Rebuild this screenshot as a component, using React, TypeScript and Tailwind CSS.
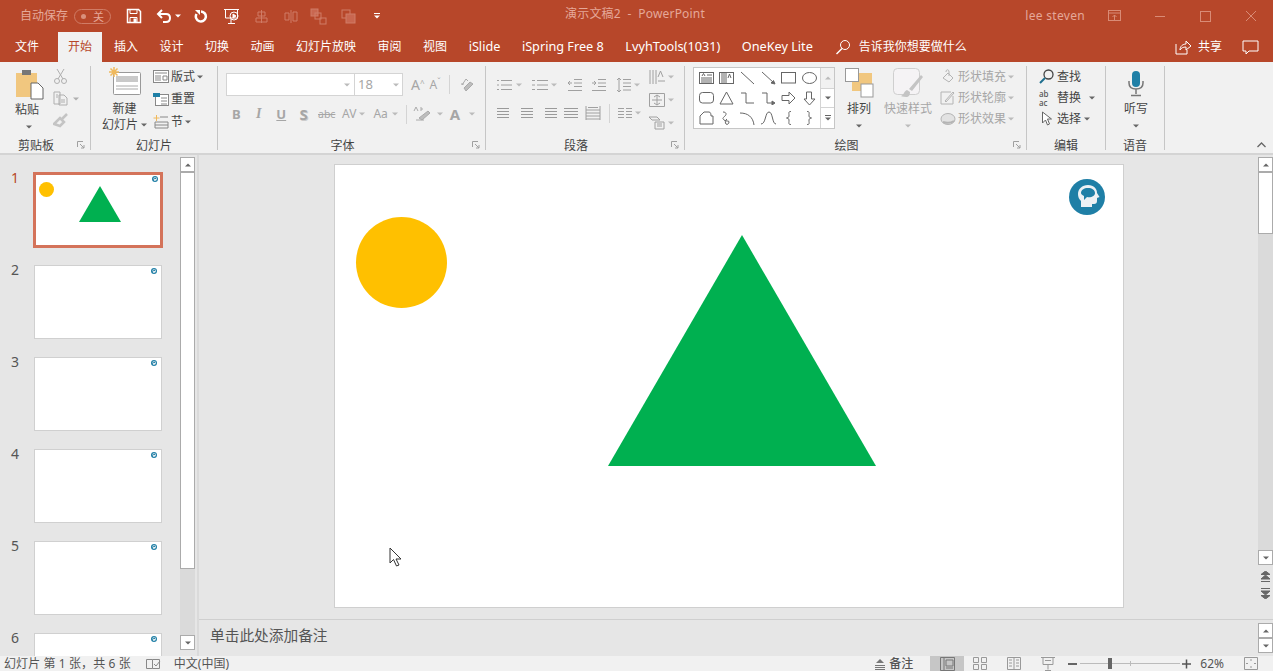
import type { ReactNode } from "react";

const FONT = "font-['Noto_Sans','Noto_Sans_CJK_SC',sans-serif]";

function Caret({ color = "#666", className = "" }: { color?: string; className?: string }) {
  return (
    <svg width="6" height="4" viewBox="0 0 6 4" className={`shrink-0 ${className}`}>
      <path d="M0 0.5h6L3 3.5z" fill={color} />
    </svg>
  );
}

function Ico({ w = 16, h = 16, color = "#777", className = "", children }: { w?: number; h?: number; color?: string; className?: string; children: ReactNode }) {
  return (
    <svg width={w} height={h} viewBox={`0 0 ${w} ${h}`} fill="none" stroke={color} strokeWidth="1" className={`shrink-0 ${className}`}>
      {children}
    </svg>
  );
}

function Expander() {
  return (
    <svg width="8" height="8" viewBox="0 0 8 8" fill="none" stroke="#A0A0A0" className="justify-self-end mr-[5px]">
      <path d="M0.5 6V0.5H6M3 3l4 4M7 4v3H4" />
    </svg>
  );
}

function Group({ w, label, expander, children }: { w: string; label: string; expander?: boolean; children: ReactNode }) {
  return (
    <div className={`${w} h-[84px] shrink-0 flex flex-col border-r border-[#C6C6C6]`}>
      <div className="h-[72px] flex">{children}</div>
      <div className={`grid items-center h-[12px] text-[12px] leading-[14px] text-[#444] ${expander ? "grid-cols-[1fr_auto_1fr_18px]" : "grid-cols-[1fr_auto_1fr]"}`}>
        <span />
        <span className="translate-y-[1px]">{label}</span>
        <span />
        {expander && <Expander />}
      </div>
    </div>
  );
}

const shapes: ReactNode[] = [
  <g key="a"><rect x="0.5" y="1.5" width="14" height="11" /><path d="M3 5l1.5-2.5L6 5M8 4h5M2 7h11M2 9h11M2 11h11" /></g>,
  <g key="b"><rect x="0.5" y="1.5" width="14" height="11" /><path d="M3 2v10M5 2v10M7 2v10M9 7l1.5-4L12 7" /></g>,
  <path key="c" d="M1 1l13 12" />,
  <g key="d"><path d="M1 1l12 11" /><path d="M14 13l-4-1 2.5-2.500z" fill="#666" /></g>,
  <rect key="e" x="0.5" y="1.500" width="14" height="10.500" />,
  <ellipse key="f" cx="7.500" cy="7" rx="7" ry="5.500" />,
  <rect key="g" x="0.500" y="1.500" width="14" height="10.500" rx="3" />,
  <path key="h" d="M7.500 1L14 13H1z" />,
  <path key="i" d="M1 2h5v10h8" />,
  <g key="j"><path d="M1 2h5v10h6" /><path d="M14 12l-3-2v4z" fill="#666" /></g>,
  <path key="k" d="M1 4.500h7V1l6 6-6 6V9.500H1z" />,
  <path key="l" d="M4.500 1h5v7H13l-5.500 6L2 8h2.500z" />,
  <path key="m" d="M1 13V5l4-4h5c2 0 2 3 2 4h2v8z" />,
  <path key="n" d="M4 1c3 0 4 2 2 4S3 7 5 9s5 0 5 2-2 3-3 2-1-4 1-5" />,
  <path key="o" d="M0 2c8 0 13 4 14 12" />,
  <path key="p" d="M0 13C5 13 4 1 8 1s3 12 7 12" />,
  <path key="q" d="M10 0.500C7 0.500 8 2 8 4S8 6.500 5.500 7C8 7.500 8 8 8 10s-1 3.500 2 3.500" />,
  <path key="r" d="M5 0.500C8 0.500 7 2 7 4s0 2.500 2.500 3C7 7.500 7 8 7 10s1 3.500-2 3.500" />,
];

const shapeActions = [
  { label: "形状填充", icon: <g><path d="M3 9l5-5 5 5-4 4z" /><path d="M6 3c0-3 3-3 3 0v4" /></g> },
  { label: "形状轮廓", icon: <g><path d="M11 2H1v12h12V6" /><path d="M5 11l8-9 1 1-8 9z" /></g> },
  { label: "形状效果", icon: <g><ellipse cx="8" cy="8" rx="7" ry="5.500" fill="#E2E2E2" /><path d="M3 11c3 1 8 1 11-1" strokeWidth="2" /></g> },
];

const cnTabs = ["插入", "设计", "切换", "动画", "幻灯片放映", "审阅", "视图"];
const enTabs = ["iSlide", "iSpring Free 8", "LvyhTools(1031)", "OneKey Lite"];

function Lines({ x = 0, n = 4, w = 12, color = "#9A9A9A" }: { x?: number; n?: number; w?: number; color?: string }) {
  return (
    <Ico w={16} h={14} color={color}>
      <path d={Array.from({ length: n }, (_, i) => `M${x} ${2.5 + i * 3}h${w}`).join("")} />
    </Ico>
  );
}

function TitleBar() {
  return (
    <div className="h-[32px] shrink-0 flex items-center relative text-[12px] text-[#E5A899]">
      <span className="ml-[20px] w-[48px]">自动保存</span>
      <div className="ml-[6px] w-[37px] h-[15px] rounded-full border border-[#D07C66] flex items-center justify-between px-[6px] text-[11px] leading-none">
        <span className="w-[5px] h-[5px] rounded-full bg-[#D9907C]" />
        <span>关</span>
      </div>
      <Ico w={16} h={16} color="#fff" className="ml-[15px]">
        <path d="M1.500 1.500h11l2 2v11h-13z" strokeWidth="1.500" />
        <path d="M4 1.500v4h7v-4M4 14.500v-5h7v5" />
        <rect x="8" y="11" width="2" height="3" fill="#fff" />
      </Ico>
      <Ico w={16} h={16} color="#fff" className="ml-[14px]">
        <path d="M2 6h8c3 0 4 2 4 4s-1 4-4 4H7" strokeWidth="2" />
        <path d="M6 2L2 6l4 4" strokeWidth="2" />
      </Ico>
      <Caret color="#fff" className="ml-[3px]" />
      <Ico w={14} h={14} color="#fff" className="ml-[13px]">
        <path d="M7 2.500A5 5 0 1 1 2.500 5" strokeWidth="2.500" />
        <path d="M1 1h5v5z" fill="#fff" stroke="none" />
      </Ico>
      <Ico w={17} h={17} color="#fff" className="ml-[15px]">
        <path d="M1 1.500h15M2.500 2v8h12V2M8 11v4M5 15.500h7" />
        <circle cx="11" cy="8" r="4" />
        <path d="M10 6l3 2-3 2z" fill="#fff" />
      </Ico>
      <Ico w={15} h={15} color="#D07C66" className="ml-[14px]">
        <path d="M7.500 1v13M4 3h7v4H4zM2 9h11v4H2z" />
      </Ico>
      <Ico w={15} h={15} color="#D07C66" className="ml-[15px]">
        <path d="M7 1v13M1 4h4v7H1zM9 3h4v9H9z" />
      </Ico>
      <Ico w={17} h={17} color="#D07C66" className="ml-[11px]">
        <rect x="1" y="1" width="7" height="7" fill="#C96750" />
        <rect x="5" y="5" width="6" height="6" />
        <rect x="10" y="10" width="6" height="6" />
      </Ico>
      <Ico w={15} h={15} color="#D07C66" className="ml-[14px]">
        <rect x="1" y="1" width="8" height="8" />
        <rect x="5" y="5" width="9" height="9" fill="#C96750" />
      </Ico>
      <div className="ml-[18px] flex flex-col items-center gap-[1px]">
        <span className="w-[6px] h-[1px] bg-white" />
        <Caret color="#fff" />
      </div>
      <span className="absolute left-[565px] top-[5px] text-[12px] leading-[18px] tracking-[0.2px]">演示文稿2&nbsp; -&nbsp; PowerPoint</span>
      <span className="ml-auto tracking-[0.3px]">lee steven</span>
      <Ico w={14} h={12} color="#D98B76" className="ml-[23px]">
        <rect x="0.500" y="0.500" width="12" height="10" />
        <path d="M0.500 3h12M6.500 10V5M4.500 7l2-2 2 2" />
      </Ico>
      <span className="ml-[33px] w-[10px] h-[1px] bg-[#D98B76]" />
      <span className="ml-[35px] w-[11px] h-[11px] border border-[#D98B76]" />
      <Ico w={12} h={12} color="#D98B76" className="ml-[34px] mr-[16px]">
        <path d="M1 1l10 10M11 1L1 11" />
      </Ico>
    </div>
  );
}

function TabsRow() {
  return (
    <div className="h-[30px] shrink-0 flex items-end text-[12px] text-white">
      <span className="ml-[15px] h-[30px] leading-[29px]">文件</span>
      <span className="ml-[19px] w-[44px] h-[30px] bg-[#F1F1F1] text-[#B7472A] text-center leading-[29px]">开始</span>
      <div className="ml-[12px] h-[30px] flex gap-[21.500px] leading-[29px] whitespace-nowrap">
        {cnTabs.map((t) => (
          <span key={t}>{t}</span>
        ))}
        {enTabs.map((t) => (
          <span key={t} className="text-[12.7px]">{t}</span>
        ))}
      </div>
      <div className="ml-[22px] h-[30px] flex items-center">
        <Ico w={16} h={16} color="#fff">
          <circle cx="10" cy="6" r="4.500" />
          <path d="M7 9.500L1.500 15" strokeWidth="1.500" />
        </Ico>
        <span className="ml-[8px]">告诉我你想要做什么</span>
      </div>
      <div className="ml-auto h-[30px] flex items-center">
        <Ico w={16} h={16} color="#fff">
          <path d="M1 5v10h11V11" />
          <path d="M5 11c0-4 3-6 6-6V2l5 5-5 4V8c-3 0-5 1-6 3z" />
        </Ico>
        <span className="ml-[7px]">共享</span>
        <Ico w={17} h={15} color="#fff" className="ml-[20px] mr-[14px]">
          <path d="M1 1h15v10H7l-3 3v-3H1z" />
        </Ico>
      </div>
    </div>
  );
}

function Ribbon() {
  return (
    <div className="h-[93px] shrink-0 bg-[#F1F1F1] border-b-2 border-[#D4D4D4] flex py-[4px] relative text-[12px] text-[#444]">
      <Group w="w-[91px]" label="剪贴板" expander>
        <div className="ml-[15px] w-[24px] flex flex-col items-start">
          <svg width="30" height="32" viewBox="0 0 30 32" className="mt-[2px] shrink-0">
            <rect x="1" y="5" width="21" height="24" fill="#F1C77F" />
            <rect x="7" y="2" width="9" height="5" fill="#777" />
            <path d="M16 15h7l5 5v11H16z" fill="#fff" stroke="#666" />
          </svg>
          <span className="mt-[2px] leading-[16px] whitespace-nowrap">粘贴</span>
          <Caret className="mt-[7px] ml-[11px]" />
        </div>
        <div className="ml-[14px] pt-[3px] flex flex-col gap-[7px]">
          <Ico w={15} h={15} color="#AFAFAF">
            <path d="M4 0l6 10M11 0L5 10" />
            <circle cx="4" cy="12" r="2.500" />
            <circle cx="11" cy="12" r="2.500" />
          </Ico>
          <div className="flex items-center gap-[5px]">
            <Ico w={15} h={15} color="#AFAFAF">
              <path d="M1 1h6v12H1zM6 4h5l3 3v7H6zM3 4h2M3 6h2M8 9h4M8 11h4" />
            </Ico>
            <Caret color="#AFAFAF" />
          </div>
          <Ico w={15} h={15} color="#C4C4C4">
            <path d="M9 6l5-5M1 11l6-6 4 4-4 4z" strokeWidth="2.500" />
          </Ico>
        </div>
      </Group>

      <Group w="w-[127px]" label="幻灯片">
        <div className="ml-[10px] w-[48px] flex flex-col items-center">
          <svg width="32" height="30" viewBox="0 0 32 30" className="mt-[1px] shrink-0">
            <rect x="4.500" y="5.500" width="27" height="22" fill="#fff" stroke="#999" rx="1" />
            <rect x="7" y="9" width="22" height="6" fill="#C9C9C9" />
            <path d="M7 19h22M7 22h22" stroke="#AAA" />
            <path d="M5 0v10M0 5h10M1.500 1.500l7 7M8.500 1.500l-7 7" stroke="#F0B95C" strokeWidth="1.500" />
          </svg>
          <span className="mt-[4px] -ml-[1px] leading-[16px]">新建</span>
          <span className="leading-[15px] -ml-[1px] whitespace-nowrap flex items-center gap-[3px]">
            幻灯片
            <Caret />
          </span>
        </div>
        <div className="ml-[4px] pt-[2px] flex flex-col gap-[5.500px]">
          <div className="h-[17px] flex items-center gap-[2px]">
            <Ico w={16} h={14} color="#888">
              <rect x="0.500" y="0.500" width="15" height="12" fill="#fff" />
              <path d="M2 3h12M2 6h6M2 8h6M2 10h6M10 6h4v4h-4z" />
            </Ico>
            <span>版式</span>
            <Caret />
          </div>
          <div className="h-[17px] flex items-center gap-[2px]">
            <Ico w={16} h={14} color="#888">
              <rect x="2.500" y="2.500" width="13" height="11" fill="#fff" />
              <path d="M0 1h7v4H0z" fill="#1F7FA6" stroke="none" />
              <path d="M8 6h6M8 9h6M8 12h6" />
            </Ico>
            <span>重置</span>
          </div>
          <div className="h-[17px] flex items-center gap-[2px]">
            <Ico w={16} h={14} color="#888">
              <path d="M0.500 3h6M3.500 0v6" stroke="#F0B95C" />
              <path d="M7 2h8M2 7h13v6H2zM2 10h13" />
            </Ico>
            <span>节</span>
            <Caret />
          </div>
        </div>
      </Group>

      <Group w="w-[268px]" label="字体" expander>
        <div className="flex flex-col pl-[8px] w-full">
          <div className="flex items-center mt-[7px]">
            <div className="w-[129px] h-[23px] bg-white border border-[#D4D4D4] flex items-center justify-end pr-[4px]">
              <Caret color="#BBB" />
            </div>
            <div className="w-[48px] h-[23px] bg-white border border-l-0 border-[#D4D4D4] flex items-center justify-between px-[3px] text-[13px] text-[#A6A6A6]">
              <span>18</span>
              <Caret color="#BBB" />
            </div>
            <span className="ml-[8px] text-[14px] text-[#A6A6A6] leading-none">A<sup className="text-[8px]">^</sup></span>
            <span className="ml-[5px] text-[12px] text-[#A6A6A6] leading-none">A<sup className="text-[8px]">ˇ</sup></span>
            <span className="ml-[8px] w-px h-[19px] bg-[#D4D4D4]" />
            <Ico w={16} h={16} color="#AAA" className="ml-[9px]">
              <path d="M3 8l4-6 2 2M2 7h3" />
              <path d="M7 14l7-7-3-2-6 6z" fill="#BDBDBD" />
            </Ico>
          </div>
          <div className="flex items-center mt-[9px] h-[18px] -ml-[1px] text-[#A6A6A6] text-[13px] font-bold leading-none">
            <span className="w-[22.500px] text-center">B</span>
            <span className="w-[22.500px] text-center italic font-['Liberation_Serif',serif] text-[14px]">I</span>
            <span className="w-[22.500px] text-center underline">U</span>
            <span className="w-[22.500px] text-center text-[15px] [text-shadow:1px_1px_0_#ccc]">S</span>
            <span className="ml-[3px] w-[16px] text-[10.500px] line-through font-normal">abc</span>
            <span className="ml-[8px] text-[12px] font-normal">AV</span>
            <Caret color="#BBB" className="ml-[3px]" />
            <span className="ml-[8px] text-[12px] font-normal">Aa</span>
            <Caret color="#BBB" className="ml-[4px]" />
            <span className="ml-[8px] w-px h-[19px] bg-[#D4D4D4]" />
            <Ico w={18} h={16} color="#AAA" className="ml-[6px]">
              <path d="M1 5l2-4 2 4M8 1v4M8 3h2M3 14h8" />
              <path d="M6 12l9-7 2 2-8 7z" fill="#BDBDBD" />
            </Ico>
            <Caret color="#BBB" className="ml-[6px]" />
            <span className="ml-[7px] text-[15px]">A</span>
            <Caret color="#BBB" className="ml-[9px]" />
          </div>
        </div>
      </Group>

      <Group w="w-[199px]" label="段落" expander>
        <div className="w-[163px] pl-[11px] pt-[11px] flex flex-col gap-[12px]">
          <div className="flex items-center h-[16px]">
            <Ico w={16} h={14} color="#A0A0A0"><path d="M4 2.500h11M4 7h11M4 11.500h11M0 2.500h2M0 7h2M0 11.500h2" /></Ico>
            <Caret color="#BBB" className="ml-[3px]" />
            <Ico w={16} h={14} color="#A0A0A0" className="ml-[10px]"><path d="M5 2.500h11M5 7h11M5 11.500h11M0 2.500h3M0 7h3M0 11.500h3" /></Ico>
            <Caret color="#BBB" className="ml-[3px]" />
            <Ico w={16} h={14} color="#A0A0A0" className="ml-[10px]"><path d="M7 1.500h8M7 5h8M7 8.500h8M1 12.500h14M5 5H1M3 3L1 5l2 2" /></Ico>
            <Ico w={16} h={14} color="#A0A0A0" className="ml-[8px]"><path d="M7 1.500h8M7 5h8M7 8.500h8M1 12.500h14M1 5h4M3 3l2 2-2 2" /></Ico>
            <Ico w={16} h={16} color="#A0A0A0" className="ml-[9px]"><path d="M7 2.500h8M7 6h8M7 9.500h8M7 13h8M3 1v14M1 3l2-2 2 2M1 13l2 2 2-2" /></Ico>
            <Caret color="#BBB" className="ml-[2px]" />
          </div>
          <div className="flex items-center h-[16px]">
            <Lines w={12} />
            <span className="ml-[6px]"><Lines w={12} x={2} /></span>
            <span className="ml-[6px]"><Lines w={12} x={4} /></span>
            <span className="ml-[6px]"><Lines n={4} w={14} x={1} /></span>
            <Ico w={16} h={16} color="#A0A0A0" className="ml-[6px]"><path d="M1 1v14M15 1v14M1 5h14M1 8h14M1 11h14M1 14h14M3 2.500h10" /></Ico>
            <span className="ml-[8px] w-px h-[19px] bg-[#D4D4D4]" />
            <Ico w={16} h={14} color="#A0A0A0" className="ml-[7px]"><path d="M1 2.500h6M1 5.500h6M1 8.500h6M1 11.500h6M9 2.500h6M9 5.500h6M9 8.500h6M9 11.500h6" /></Ico>
            <Caret color="#BBB" className="ml-[2px]" />
          </div>
        </div>
        <div className="pt-[2px] flex flex-col gap-[6px]">
          <div className="flex items-center gap-[3px] h-[17px]">
            <Ico w={16} h={16} color="#A0A0A0"><path d="M1 1v14M4 1v14M7 1v14M9 8l2.500-6L14 8M9 12h7" /></Ico>
            <Caret color="#BBB" />
          </div>
          <div className="flex items-center gap-[3px] h-[17px]">
            <Ico w={16} h={16} color="#A0A0A0"><path d="M0.500 1.500h15v13H0.500zM8 3v10M5 5l3-2 3 2M5 11l3 2 3-2M3 8h10" /></Ico>
            <Caret color="#BBB" />
          </div>
          <div className="flex items-center gap-[3px] h-[17px]">
            <Ico w={16} h={16} color="#A0A0A0"><path d="M0 2h8l3 3H3zM6 7h9v7H6zM8 9h5M8 11h5" /></Ico>
            <Caret color="#BBB" />
          </div>
        </div>
      </Group>

      <Group w="w-[342px]" label="绘图" expander>
        <div className="ml-[8px] mt-[1px] w-[142px] h-[62px] flex bg-white border border-[#C6C6C6]">
          <div className="w-[126px] grid grid-cols-6 items-center pl-[2px]">
            {shapes.map((s, i) => (
              <span key={i} className="flex justify-center">
                <Ico w={15} h={14} color="#666">{s}</Ico>
              </span>
            ))}
          </div>
          <div className="flex-1 flex flex-col border-l border-[#D4D4D4]">
            <div className="h-[21px] bg-[#F1F1F1] flex items-center justify-center border-b border-[#D4D4D4]">
              <Caret color="#BBB" className="rotate-180" />
            </div>
            <div className="h-[19px] flex items-center justify-center border-b border-[#D4D4D4]">
              <Caret />
            </div>
            <div className="flex-1 flex flex-col items-center justify-center gap-[1px]">
              <span className="w-[6px] h-px bg-[#666]" />
              <Caret />
            </div>
          </div>
        </div>
        <div className="ml-[7px] w-[34px] flex flex-col items-center">
          <svg width="29" height="30" viewBox="0 0 29 30" className="mt-[2px] shrink-0">
            <rect x="7" y="5" width="20" height="18" fill="#F1C77F" />
            <rect x="0.500" y="0.500" width="13" height="13" fill="#fff" stroke="#999" />
            <rect x="16" y="16" width="12" height="13" fill="#fff" stroke="#999" />
          </svg>
          <span className="mt-[3px] leading-[16px] whitespace-nowrap">排列</span>
          <Caret className="mt-[7px]" />
        </div>
        <div className="ml-[8px] w-[48px] flex flex-col items-center text-[#A6A6A6]">
          <svg width="32" height="32" viewBox="0 0 32 32" className="mt-[1px] shrink-0">
            <rect x="1.500" y="1.500" width="26" height="26" rx="4" fill="#F5F3F5" stroke="#CFCFCF" />
            <path d="M14 30c-3 0-5-1-5-1 3-1 3-5 6-6l3 2c0 3-1 5-4 5zM17 22l12-14 2 2-11 14z" fill="#C4C4C4" />
          </svg>
          <span className="mt-[2px] leading-[16px] whitespace-nowrap">快速样式</span>
          <Caret color="#BBB" className="mt-[7px]" />
        </div>
        <div className="ml-[8px] pt-[2px] flex flex-col gap-[4px] text-[#A6A6A6]">
          {shapeActions.map((a) => (
            <div key={a.label} className="h-[17px] flex items-center gap-[2px] whitespace-nowrap">
              <Ico w={16} h={16} color="#B4B4B4">{a.icon}</Ico>
              <span>{a.label}</span>
              <Caret color="#BBB" />
            </div>
          ))}
        </div>
      </Group>

      <Group w="w-[79px]" label="编辑">
        <div className="pl-[12px] pt-[2px] flex flex-col gap-[4px]">
          <div className="h-[17px] flex items-center gap-[3px]">
            <Ico w={15} h={15} color="#1F6F8F">
              <circle cx="9.500" cy="5.500" r="4.500" strokeWidth="1.300" stroke="#444" />
              <path d="M6 9l-5 5" strokeWidth="2" />
            </Ico>
            <span>查找</span>
          </div>
          <div className="h-[17px] flex items-center gap-[3px]">
            <span className="w-[15px] text-[8px] leading-[9px] text-[#555] font-medium">ab<br />ac</span>
            <span>替换</span>
            <Caret className="ml-[5px]" />
          </div>
          <div className="h-[17px] flex items-center gap-[3px]">
            <Ico w={15} h={15} color="#666">
              <path d="M3.500 1v11l3-3 2 5 2-1-2-5h4z" fill="#fff" />
            </Ico>
            <span>选择</span>
            <Caret />
          </div>
        </div>
      </Group>

      <Group w="w-[59px]" label="语音">
        <div className="w-full pl-[2px] flex flex-col items-center">
          <svg width="16" height="26" viewBox="0 0 16 26" className="mt-[5px] shrink-0">
            <rect x="4" y="0" width="8" height="16" rx="4" fill="#1F7FA6" />
            <path d="M1 10v2c0 4 3 6 7 6s7-2 7-6v-2M8 18v5M3 24.500h10" fill="none" stroke="#777" strokeWidth="1.500" />
          </svg>
          <span className="mt-[4px] leading-[16px]">听写</span>
          <Caret className="mt-[7px]" />
        </div>
      </Group>

      <svg width="9" height="6" viewBox="0 0 9 6" fill="none" stroke="#666" strokeWidth="1.300" className="absolute right-[7px] bottom-[5px]">
        <path d="M0.500 5l4-4 4 4" />
      </svg>
    </div>
  );
}

function ScrollBtn({ up = false, className = "" }: { up?: boolean; className?: string }) {
  return (
    <div className={`h-[15px] w-[15px] bg-white border border-[#ABABAB] flex items-center justify-center shrink-0 ${className}`}>
      <Caret color="#666" className={up ? "rotate-180" : ""} />
    </div>
  );
}

function Logo({ size }: { size: number }) {
  return (
    <svg width={size} height={size} viewBox="0 0 36 36">
      <circle cx="18" cy="18" r="18" fill="#1F7FA6" />
      <path d="M9 15c0-5 4-9 10-9s9 4 9 8l2.500 4-2.500 1v3c0 2-1 3-3 3h-2v3H12v-6c-2-2-3-4-3-7z" fill="#EDF1F4" />
      <path d="M12 14c0-3 3-5 7-5s7 2 7 5-4 5-8 4l-3 3v-4c-2-1-3-2-3-3z" fill="#1F7FA6" />
    </svg>
  );
}

function Thumb({ n }: { n: number }) {
  const active = n === 1;
  return (
    <div className="h-[92px] flex shrink-0 pl-[11px]">
      <span className={`w-[22px] text-[14px] leading-[18px] -mt-[3px] ${active ? "text-[#B7472A]" : "text-[#555]"}`}>{n}</span>
      {active ? (
        <div className="w-[130px] h-[76px] bg-white border-[3px] border-[#D4735A] relative">
          <span className="absolute left-[3px] top-[7px] w-[15px] h-[15px] rounded-full bg-[#FFC000]" />
          <svg width="42" height="36" viewBox="0 0 42 36" className="absolute left-[43px] top-[11px]">
            <path d="M21 0l21 36H0z" fill="#00B050" />
          </svg>
          <span className="absolute right-[2px] top-[1px] flex"><Logo size={6} /></span>
        </div>
      ) : (
        <div className="ml-px mt-px w-[128px] h-[74px] bg-white border border-[#D0D0D0] relative">
          <span className="absolute right-[4px] top-[2px] flex"><Logo size={6} /></span>
        </div>
      )}
    </div>
  );
}

function SlidesPanel() {
  return (
    <div className="w-[199px] shrink-0 flex border-r-2 border-[#DADADA]">
      <div className="w-[180px] pt-[17px] overflow-hidden flex flex-col">
        {[1, 2, 3, 4, 5, 6].map((n) => (
          <Thumb key={n} n={n} />
        ))}
      </div>
      <div className="w-[15px] pt-[2px] pb-[6px] flex flex-col">
        <ScrollBtn up />
        <div className="flex-1 bg-[#DADADA]">
          <div className="h-[397px] bg-white border border-[#ABABAB]" />
        </div>
        <ScrollBtn />
      </div>
    </div>
  );
}

function Slide() {
  return (
    <div className="ml-[135px] mt-[9px] w-[790px] h-[444px] bg-white border border-[#CFCFCF] relative shrink-0">
      <span className="absolute left-[21px] top-[52px] w-[91px] h-[91px] rounded-full bg-[#FFC000]" />
      <svg width="268" height="231" viewBox="0 0 268 231" className="absolute left-[273px] top-[70px]">
        <path d="M134 0l134 231H0z" fill="#00B050" />
      </svg>
      <span className="absolute left-[734px] top-[14px] flex"><Logo size={36} /></span>
      <svg width="14" height="21" viewBox="0 0 14 21" className="absolute left-[54px] top-[382px]">
        <path d="M1 1v15l3.500-3.500 3 6.500 2.500-1-3-6h5z" fill="#fff" stroke="#333" />
      </svg>
    </div>
  );
}

function StatusBar() {
  return (
    <div className="h-[15px] shrink-0 bg-[#F1F1F1] flex items-center text-[12px] leading-[15px] text-[#555] whitespace-nowrap">
      <span className="ml-[4px] tracking-[0.1px]">幻灯片 第 1 张，共 6 张</span>
      <Ico w={15} h={12} color="#888" className="ml-[15px]">
        <path d="M0.500 1.500h6v9h-6zM6.500 1.500h7v9h-7M8 6l2 2 4-5" />
      </Ico>
      <span className="ml-[13px]">中文(中国)</span>
      <Ico w={12} h={12} color="#777" className="ml-auto">
        <path d="M1 7.500h10M1 9.500h10M1 11.500h10" />
        <path d="M6 1l4 4H2z" fill="#777" stroke="none" />
      </Ico>
      <span className="ml-[3px] font-medium">备注</span>
      <div className="ml-[17px] w-[34px] h-[15px] bg-[#C6C6C6] flex items-center justify-center">
        <Ico w={15} h={14} color="#777"><path d="M0.500 0.500h14v13h-14zM4 0.500v13M6 3h7v6H6zM6 11h7" /></Ico>
      </div>
      <Ico w={14} h={13} color="#999" className="ml-[9px]"><path d="M0.500 0.500h5v5h-5zM8.500 0.500h5v5h-5zM0.500 7.500h5v5h-5zM8.500 7.500h5v5h-5z" /></Ico>
      <Ico w={14} h={13} color="#999" className="ml-[20px]"><path d="M0.500 0.500h13v12h-13zM7 0.500v12M2 3h3M2 6h3M2 9h3M9 3h3M9 6h3M9 9h3" /></Ico>
      <Ico w={14} h={14} color="#999" className="ml-[20px]"><path d="M0 0.500h14M2 0.500v7h10v-7M7 7.500v5M4 13.500h6M4 3.500h6" /></Ico>
      <span className="ml-[13px] w-[9px] h-[2px] bg-[#666]" />
      <div className="ml-[3px] w-[100px] h-[11px] relative flex items-center">
        <span className="w-full h-px bg-[#BBB]" />
        <span className="absolute left-[50px] w-px h-[5px] bg-[#BBB]" />
        <span className="absolute left-[28px] w-[4px] h-[11px] bg-[#666]" />
      </div>
      <Ico w={10} h={10} color="#555" className="ml-[2px]"><path d="M0 5h9M4.500 0.500v9" strokeWidth="1.500" /></Ico>
      <span className="ml-[8px] text-[12px]">62%</span>
      <Ico w={14} h={13} color="#999" className="ml-[20px] mr-[15px]">
        <path d="M0.500 0.500h13v12h-13zM7 2v2M7 9v2M2 6.500h2M10 6.500h2" />
      </Ico>
    </div>
  );
}

export default function App() {
  return (
    <div className={`w-[1273px] h-[671px] overflow-hidden flex flex-col bg-[#E6E6E6] ${FONT}`}>
      <div className="bg-[#B7472A] flex flex-col">
        <TitleBar />
        <TabsRow />
      </div>
      <Ribbon />
      <div className="flex-1 min-h-0 flex">
        <SlidesPanel />
        <div className="flex-1 min-w-0 flex flex-col">
          <div className="h-[464px] flex">
            <div className="flex-1 min-w-0">
              <Slide />
            </div>
            <div className="w-[15px] pt-[2px] flex flex-col items-center shrink-0">
              <ScrollBtn up />
              <div className="h-[378px] w-full bg-[#DADADA] shrink-0">
                <div className="h-[62px] bg-white border border-[#ABABAB]" />
              </div>
              <ScrollBtn />
              <div className="mt-[6px] flex flex-col items-center gap-[6px]">
                <Ico w={9} h={11} color="#666"><path d="M0 3.500h9L4.500 0zM0 8h9L4.500 4zM0 10.500h9" fill="#666" /></Ico>
                <Ico w={9} h={11} color="#666"><path d="M0 0.500h9M0 3h9L4.500 7zM0 7.500h9L4.500 11z" fill="#666" /></Ico>
              </div>
            </div>
          </div>
          <div className="h-[37px] border-t border-[#CFCFCF] flex">
            <span className="ml-[11px] mt-[5px] text-[14.700px] leading-[20px] text-[#555]">单击此处添加备注</span>
            <div className="ml-auto flex flex-col pt-[3px]">
              <ScrollBtn up className="h-[14px]" />
              <ScrollBtn className="h-[13px]" />
            </div>
          </div>
        </div>
      </div>
      <StatusBar />
    </div>
  );
}
